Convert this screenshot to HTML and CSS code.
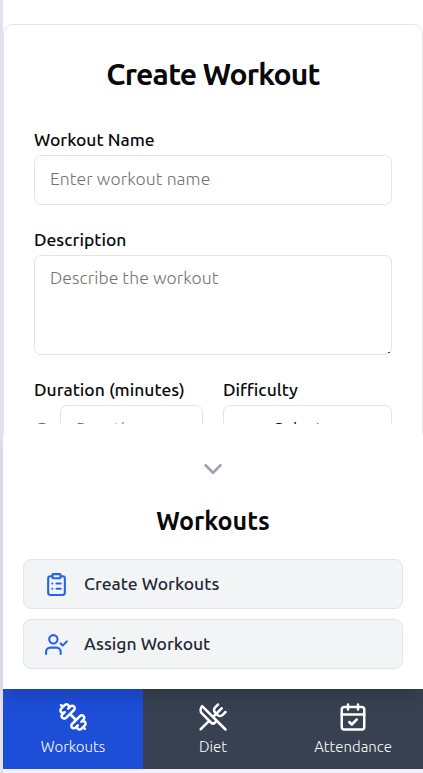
FILE: index.html
```html
<!DOCTYPE html>
<html lang="en">
<head>
<meta charset="utf-8">
<title>Create Workout</title>
<link rel="stylesheet" href="styles.css">
</head>
<body>
<div class="app">
  <main class="card">
    <h1 class="title"><span>Create Workout</span></h1>
    <div class="field">
      <label class="label" for="name">Workout Name</label>
      <input class="control" id="name" placeholder="Enter workout name">
    </div>
    <div class="field">
      <label class="label" for="desc">Description</label>
      <textarea class="control area" id="desc" placeholder="Describe the workout"></textarea>
      <i class="grip"></i>
    </div>
    <div class="columns">
      <div class="duration">
        <label class="label" for="dur">Duration (minutes)</label>
        <div class="with-icon">
          <svg class="icon clock" viewBox="0 0 24 24"><circle cx="12" cy="12" r="10"/><path d="M12 6v6l4 2"/></svg>
          <input class="control" id="dur" placeholder="Duration">
        </div>
      </div>
      <div class="difficulty">
        <span class="label">Difficulty</span>
        <div class="control select">Select</div>
      </div>
    </div>
  </main>

  <section class="sheet">
    <svg class="icon chevron" viewBox="0 0 24 24"><path d="m6 9 6 6 6-6"/></svg>
    <h2 class="sheet-title">Workouts</h2>
    <div class="actions">
      <button class="action">
        <svg class="icon" viewBox="0 0 24 24"><rect width="8" height="4" x="8" y="2" rx="1"/><path d="M16 4h2a2 2 0 0 1 2 2v14a2 2 0 0 1-2 2H6a2 2 0 0 1-2-2V6a2 2 0 0 1 2-2h2M12 11h4M12 16h4M8 11h.01M8 16h.01"/></svg>
        <span>Create Workouts</span>
      </button>
      <button class="action">
        <svg class="icon" viewBox="0 0 24 24"><path d="M16 21v-2a4 4 0 0 0-4-4H6a4 4 0 0 0-4 4v2"/><circle cx="9" cy="7" r="4"/><path d="m16 11 2 2 4-4"/></svg>
        <span>Assign Workout</span>
      </button>
    </div>
  </section>

  <nav class="nav">
    <a class="tab active">
      <svg class="icon" viewBox="0 0 24 24"><path d="M14.4 14.4 9.6 9.6M18.657 21.485a2 2 0 1 1-2.829-2.828l-1.767 1.768a2 2 0 1 1-2.829-2.829l6.364-6.364a2 2 0 1 1 2.829 2.829l-1.768 1.767a2 2 0 1 1 2.828 2.829zM21.5 21.5l-1.4-1.4M3.9 3.9 2.5 2.5M6.404 12.768a2 2 0 1 1-2.829-2.829l1.768-1.767a2 2 0 1 1-2.828-2.829l2.828-2.828a2 2 0 1 1 2.829 2.828l1.767-1.768a2 2 0 1 1 2.829 2.829z"/></svg>
      <span>Workouts</span>
    </a>
    <a class="tab">
      <svg class="icon" viewBox="0 0 24 24"><path d="m16 2-2.3 2.3a3 3 0 0 0 0 4.2l1.8 1.8a3 3 0 0 0 4.2 0L22 8M15 15 3.3 3.3a4.2 4.2 0 0 0 0 6l7.3 7.3c.7.7 2 .7 2.8 0L15 15Zm0 0 7 7M2.1 21.8l6.4-6.3M19 5l-7 7"/></svg>
      <span>Diet</span>
    </a>
    <a class="tab">
      <svg class="icon" viewBox="0 0 24 24"><path d="M8 2v4M16 2v4M3 10h18M9 16l2 2 4-4"/><rect width="18" height="18" x="3" y="4" rx="2"/></svg>
      <span>Attendance</span>
    </a>
  </nav>
</div>
</body>
</html>
```

FILE: styles.css
```css
* { box-sizing: border-box; margin: 0; }
body {
  height: 773px;
  overflow: hidden;
  background: #f6f0fb;
  font-family: Ubuntu, "Noto Sans", sans-serif;
  color: #09090b;
}
.app {
  height: 773px;
  padding-top: 24px;
  border-left: 3px solid #e6dfec;
  display: flex;
  flex-direction: column;
  background: linear-gradient(#fff 769px, #f6f0fb 769px);
}
.icon {
  fill: none;
  stroke: currentColor;
  stroke-width: 2;
  stroke-linecap: round;
  stroke-linejoin: round;
  flex: none;
}
.card {
  flex: none;
  height: 440px;
  margin-bottom: -40px;
  padding: 30px 30px 0;
  border: 1px solid #e4e4e7;
  border-radius: 10px;
}
.title {
  height: 40px;
  line-height: 38px;
  margin-bottom: 35px;
  text-align: center;
  font-size: 30px;
  font-weight: 600;
  letter-spacing: -0.75px;
}
.field { margin-bottom: 25px; position: relative; }
.label {
  display: block;
  height: 20px;
  margin-bottom: 5px;
  line-height: 20px;
  font-size: 17.5px;
  font-weight: 500;
  white-space: nowrap;
}
.control {
  display: block;
  width: 100%;
  height: 50px;
  padding: 0 15px 3px;
  border: 1px solid #e4e4e7;
  border-radius: 7px;
  background: #fff;
  font: 300 17.5px Ubuntu, "Noto Sans", sans-serif;
  letter-spacing: 0.08px;
  outline: 0;
}
.control::placeholder { color: #737373; opacity: 1; }
.area { height: 100px; padding-top: 9px; line-height: 25px; resize: none; }
.grip {
  position: absolute;
  right: 2px;
  bottom: 2px;
  width: 2px;
  height: 1px;
  background: #444;
}
.columns { display: grid; grid-template-columns: 169px 169px; gap: 20px; }
.with-icon { display: flex; align-items: center; gap: 10px; }
.clock { width: 16px; height: 16px; color: #6b7280; }
.select { padding-left: 50px; line-height: 46px; font-weight: 400; }
.sheet {
  position: relative;
  z-index: 1;
  flex: none;
  height: 265px;
  padding: 30px 20px 0;
  display: flex;
  flex-direction: column;
  align-items: center;
  background: #fff;
  border-radius: 14px 14px 0 0;
  box-shadow: 0 12px 15px -4px rgba(0, 0, 0, .16);
}
.chevron { width: 30px; height: 30px; color: #9ca3af; }
.sheet-title {
  height: 35px;
  margin: 20px 0;
  line-height: 34px;
  font-size: 25px;
  font-weight: 600;
}
.actions { width: 100%; display: grid; gap: 10px; }
.action {
  height: 50px;
  padding: 0 20px;
  display: flex;
  align-items: center;
  gap: 15px;
  border: 1px solid #e4e4e7;
  border-radius: 8px;
  background: #f3f4f6;
  color: #1f2937;
  font: 500 17.5px Ubuntu, "Noto Sans", sans-serif;
}
.action span { padding-bottom: 2px; }
.action .icon { width: 25px; height: 25px; color: #2563eb; }
.nav {
  flex: none;
  height: 80px;
  display: grid;
  grid-template-columns: repeat(3, 1fr);
  background: #374151;
}
.tab {
  display: flex;
  flex-direction: column;
  align-items: center;
  padding-top: 13px;
  gap: 5px;
  color: #fff;
  font-size: 15px;
  font-weight: 300;
  line-height: 20px;
}
.tab .icon { width: 30px; height: 30px; }
.active { background: #1d4ed8; }
```
